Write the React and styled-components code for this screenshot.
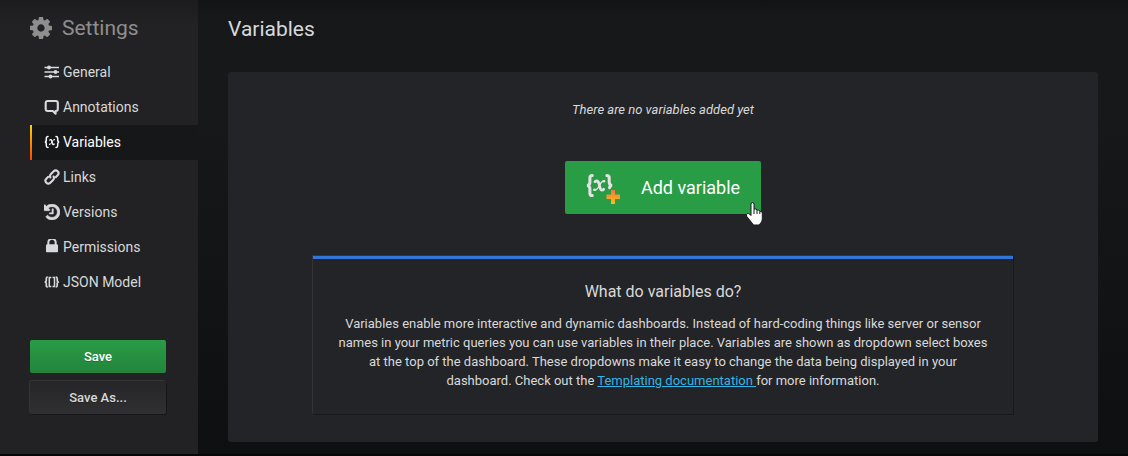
import React from "react";
import styled, { createGlobalStyle, css } from "styled-components";

const Global = createGlobalStyle`
  *, *::before, *::after { box-sizing: border-box; }
  body {
    margin: 0;
    background: #161719;
    color: #d8d9da;
    font: 400 13px/19px Roboto, "Liberation Sans", sans-serif;
  }
`;

const Page = styled.div`
  display: flex;
  min-height: 100vh;
  background: linear-gradient(180deg, #121315 0, #17181a 16px, #17181a 25%, #0e0f11 100%);
  border-bottom: 2px solid #070507;
`;

const Sidebar = styled.aside`
  flex: none;
  width: 198px;
  padding-left: 30px;
  background: linear-gradient(180deg, #1c1c1e 0, #222224 24px);
`;

const SidebarTitle = styled.h2`
  display: flex;
  align-items: center;
  gap: 10px;
  height: 55px;
  margin: 0;
  color: #8e8e8e;
  font-size: 21px;
  font-weight: 400;
  line-height: 24px;
`;

const NavList = styled.ul`
  margin: 0;
  padding: 0;
  list-style: none;
`;

const NavLink = styled.a`
  display: flex;
  align-items: center;
  gap: 3px;
  height: 35px;
  padding: 0 0 2px 14px;
  color: #d8d9da;
  font-size: 14px;
  line-height: 20px;
  text-decoration: none;

  ${({ $active }) =>
    $active &&
    css`
      padding-left: 12px;
      border-left: 2px solid;
      border-image: linear-gradient(180deg, #ffd500 0%, #ff4400 99%) 1;
      background: #161719;
      color: #fff;
    `}
`;

const Actions = styled.div`
  display: grid;
  gap: 8px;
  padding: 40px 32px 0 0;
`;

const ActionButton = styled.button`
  height: 33px;
  padding: 0;
  border: 0;
  border-radius: 2px;
  background: ${({ $primary }) =>
    $primary
      ? "linear-gradient(180deg, #299c46, #23843b)"
      : "linear-gradient(180deg, #262628, #303032)"};
  box-shadow: ${({ $primary }) =>
    $primary ? "none" : "-1px -1px 0 0 #353538, 1px 1px 0 0 #161619"};
  color: ${({ $primary }) => ($primary ? "#fff" : "#d8d9da")};
  font: 500 13px/18px Roboto, "Liberation Sans", sans-serif;
  text-shadow: 0 1px 0 rgba(0, 0, 0, 0.2);
  cursor: pointer;
`;

const Main = styled.main`
  flex: 1;
  min-width: 0;
  padding: 16px 30px 12px;
`;

const PageTitle = styled.h1`
  margin: 0 0 30px;
  font-size: 21px;
  font-weight: 400;
  line-height: 26px;
`;

const Card = styled.section`
  display: flex;
  flex-direction: column;
  align-items: center;
  padding: 28px 85px;
  border-radius: 3px;
  background: #232427;
`;

const EmptyMessage = styled.p`
  margin: 0 0 42px;
  font-style: italic;
`;

const AddButton = styled.button`
  position: relative;
  display: flex;
  align-items: center;
  gap: 20px;
  height: 53px;
  padding: 0 21px;
  border: 0;
  border-radius: 2px;
  background: #299c46;
  color: #fff;
  font: 400 18px/24px Roboto, "Liberation Sans", sans-serif;
  cursor: pointer;
`;

const Pointer = styled.svg`
  position: absolute;
  right: -3px;
  bottom: -12px;
`;

const InfoBox = styled.section`
  width: 100%;
  margin-top: 42px;
  padding: 23px 24px 24px;
  border-top: 3px solid #3274d9;
  box-shadow: -1px -1px 0 0 #343437, 1px 1px 0 0 #18191b;
  text-align: center;
`;

const InfoTitle = styled.h3`
  margin: 0 0 12px;
  font-size: 16px;
  font-weight: 400;
  line-height: 20px;
`;

const InfoText = styled.p`
  margin: 0;
`;

const DocLink = styled.a`
  color: #33b5e5;
  text-decoration: underline;
`;

const GearIcon = () => (
  <svg width="22" height="22" viewBox="128 128 1536 1536" fill="currentColor" aria-hidden="true">
    <path d="M1152 896q0-106-75-181t-181-75-181 75-75 181 75 181 181 75 181-75 75-181zm512-109v222q0 12-8 23t-20 13l-185 28q-19 54-39 91 35 50 107 138 10 12 10 25t-9 23q-27 37-99 108t-94 71q-12 0-26-9l-138-108q-44 23-91 38-16 136-29 186-7 28-36 28h-222q-14 0-24.500-8.500t-11.500-21.500l-28-184q-49-16-90-37l-141 107q-10 9-25 9-14 0-25-11-126-114-165-168-7-10-7-23 0-12 8-23 15-21 51-66.500t54-70.500q-27-50-41-99l-183-27q-13-2-21-12.500t-8-23.500v-222q0-12 8-23t19-13l186-28q14-46 39-92-40-57-107-138-10-12-10-24 0-10 9-23 26-36 98.500-107.500t94.500-71.500q13 0 26 10l138 107q44-23 91-38 16-136 29-186 7-28 36-28h222q14 0 24.500 8.500t11.500 21.500l28 184q49 16 90 37l142-107q9-9 24-9 13 0 25 10 129 119 165 170 7 8 7 22 0 12-8 23-15 21-51 66.500t-54 70.500q26 50 41 98l183 28q13 2 21 12.500t8 23.500z" />
  </svg>
);

const NavIcon = ({ children, viewBox = "0 0 16 16" }) => (
  <svg width="16" height="16" viewBox={viewBox} fill="currentColor" aria-hidden="true">
    {children}
  </svg>
);

const SlidersIcon = () => (
  <NavIcon>
    <path d="M.5 3.500h14.500M.5 8h14.500M.5 12.500h14.500" fill="none" stroke="currentColor" strokeWidth="1.500" />
    <circle cx="5" cy="3.500" r="1.900" />
    <circle cx="11.500" cy="8" r="1.900" />
    <circle cx="6.500" cy="12.500" r="1.900" />
  </NavIcon>
);

const CommentIcon = () => (
  <NavIcon>
    <path
      d="M3.700 2h8.100q2 0 2 2v6q0 2-2 2h-.2v2.700L8.800 12H3.700q-2 0-2-2V4q0-2 2-2z"
      fill="none"
      stroke="currentColor"
      strokeWidth="2.100"
      strokeLinejoin="round"
    />
  </NavIcon>
);

const VariableIcon = () => (
  <NavIcon>
    <g fill="none" stroke="currentColor" strokeLinecap="round">
      <path d="M4 2.500q-1.700 0-1.700 1.700v1.900Q2.300 8 .8 8q1.500 0 1.500 1.900v1.900q0 1.700 1.700 1.700M12 2.500q1.700 0 1.700 1.700v1.900q0 1.900 1.500 1.900-1.500 0-1.500 1.900v1.900q0 1.700-1.700 1.700" strokeWidth="1.500" />
      <path d="M5.800 6Q7.100 5 7.700 6.800l.7 2.700q.6 1.700 1.800.6" strokeWidth="1.400" />
      <path d="M10.400 5.500Q9.300 5.200 8.200 7.600 6.900 10.900 5.400 10.400" strokeWidth=".8" />
      <path d="M10.200 5.700h.1M5.600 10.300h.1" strokeWidth="1.200" />
    </g>
  </NavIcon>
);

const LinkIcon = () => (
  <NavIcon>
    <g transform="rotate(-45 8 8)" fill="none" stroke="currentColor" strokeWidth="2.100" strokeLinecap="round">
      <path d="M9.500 8.800Q8.700 10.800 6.700 10.800H2.800a2.800 2.800 0 0 1 0-5.600H5.500" />
      <path d="M6.500 7.200Q7.300 5.200 9.300 5.200h3.900a2.800 2.800 0 0 1 0 5.600H10.500" />
    </g>
  </NavIcon>
);

const HistoryIcon = () => (
  <NavIcon viewBox="128 128 1536 1536">
    <path d="M1664 896q0 156-61 298t-164 245-245 164-298 61q-172 0-327-72.500t-264-204.500q-7-10-6.500-22.500t8.500-20.500l137-138q10-9 25-9 16 2 23 12 73 95 179 147t225 52q104 0 198.500-40.500t163.500-109.500 109.500-163.500 40.500-198.500-40.500-198.500-109.500-163.500-163.500-109.500-198.500-40.500q-98 0-188 35.500t-160 101.500l137 138q31 30 14 69-17 40-59 40h-448q-26 0-45-19t-19-45v-448q0-42 40-59 39-17 69 14l130 129q107-101 244.500-156.500t284.500-55.500q156 0 298 61t245 164 164 245 61 298zm-640-288v448q0 14-9 23t-23 9h-320q-14 0-23-9t-9-23v-64q0-14 9-23t23-9h224v-352q0-14 9-23t23-9h64q14 0 23 9t9 23z" stroke="currentColor" strokeWidth="50" />
  </NavIcon>
);

const LockIcon = () => (
  <NavIcon viewBox="128 256 1536 1536">
    <path d="M640 768h512v-192q0-106-75-181t-181-75-181 75-75 181v192zm832 96v576q0 40-28 68t-68 28h-960q-40 0-68-28t-28-68v-576q0-40 28-68t68-28h32v-192q0-184 132-316t316-132 316 132 132 316v192h32q40 0 68 28t28 68z" />
  </NavIcon>
);

const JsonIcon = () => (
  <NavIcon>
    <g fill="none" stroke="currentColor">
      <path d="M3.800 3Q2.300 3 2.300 4.500v1.800Q2.300 8 .6 8q1.700 0 1.700 1.700v1.800Q2.300 13 3.800 13M11.700 3q1.500 0 1.500 1.500v1.800q0 1.700 1.700 1.700-1.700 0-1.700 1.700v1.800q0 1.500-1.500 1.500" strokeWidth="1.700" />
      <path d="M7.300 3.500H5.300v9h2M8.500 3.500h2v9h-2" strokeWidth="1.500" />
    </g>
  </NavIcon>
);

const AddVariableIcon = () => (
  <svg width="35" height="35" viewBox="1 1 35 35" color="#e3e3e3" aria-hidden="true">
    <defs>
      <linearGradient id="plus-fill" x1="0" y1="0" x2="0" y2="1">
        <stop offset="0" stopColor="#f2773a" />
        <stop offset="1" stopColor="#fbc01a" />
      </linearGradient>
    </defs>
    <g fill="none" stroke="currentColor" strokeLinecap="round">
      <path d="M7.300 6.600Q4.900 6.600 4.900 9v3.900q0 3.600-3 3.600 3 0 3 3.600V24.200q0 2.400 2.400 2.400M21.800 6.600q2.400 0 2.400 2.400v3.900q0 3.600 3 3.600-2.200 0-2.700 2.300" strokeWidth="3" />
      <path d="M10 12.600q2.700-1.800 3.900 1.700l1.300 4.900q1.200 3.300 3.500 1" strokeWidth="2.800" />
      <path d="M19.300 11.700Q17.200 11.300 14.800 15.800 11.900 22 9 21" strokeWidth="1.500" />
      <path d="M19 12.200h.1M9.500 20.700h.1" strokeWidth="2.600" />
    </g>
    <path d="M26 21h4v4.500h5v4.500h-5v5h-4v-5h-4.500v-4.500H26z" fill="url(#plus-fill)" />
  </svg>
);

const HandPointer = () => (
  <Pointer width="19" height="25" viewBox="0 0 19 25" aria-hidden="true">
    <path
      d="M6 14.500V3.200Q6 1.500 7.500 1.500T9 3.200V8q2.500-.8 3 1 2.300-.6 2.800 1.200 2.500-.2 2.500 2v5.300q0 3-1.500 4.500l-2 2H8.500L7 22 1.800 15.500Q.7 13.500 2.200 12.700q1.500-.5 2.600.6z"
      fill="#fff"
      stroke="#17181a"
      strokeWidth="1"
    />
    <path d="M9 8v5M12 9v4M14.800 10.200V13" stroke="#17181a" strokeWidth="1" />
  </Pointer>
);

const sections = [
  { label: "General", Icon: SlidersIcon },
  { label: "Annotations", Icon: CommentIcon },
  { label: "Variables", Icon: VariableIcon, active: true },
  { label: "Links", Icon: LinkIcon },
  { label: "Versions", Icon: HistoryIcon },
  { label: "Permissions", Icon: LockIcon },
  { label: "JSON Model", Icon: JsonIcon },
];

export default function App() {
  return (
    <>
      <Global />
      <Page>
        <Sidebar>
          <SidebarTitle>
            <GearIcon />
            Settings
          </SidebarTitle>
          <nav aria-label="Settings">
            <NavList>
              {sections.map(({ label, Icon, active }) => (
                <li key={label}>
                  <NavLink href="#" $active={active} aria-current={active ? "page" : undefined}>
                    <Icon />
                    {label}
                  </NavLink>
                </li>
              ))}
            </NavList>
          </nav>
          <Actions>
            <ActionButton type="button" $primary>Save</ActionButton>
            <ActionButton type="button">Save As...</ActionButton>
          </Actions>
        </Sidebar>
        <Main>
          <PageTitle>Variables</PageTitle>
          <Card>
            <EmptyMessage>There are no variables added yet</EmptyMessage>
            <AddButton type="button">
              <AddVariableIcon />
              Add variable
              <HandPointer />
            </AddButton>
            <InfoBox>
              <InfoTitle>What do variables do?</InfoTitle>
              <InfoText>
                Variables enable more interactive and dynamic dashboards. Instead of hard-coding
                things like server or sensor names in your metric queries you can use variables in
                their place. Variables are shown as dropdown select boxes at the top of the
                dashboard. These dropdowns make it easy to change the data being displayed in your
                dashboard. Check out the <DocLink href="#">Templating documentation </DocLink>
                for more information.
              </InfoText>
            </InfoBox>
          </Card>
        </Main>
      </Page>
    </>
  );
}
